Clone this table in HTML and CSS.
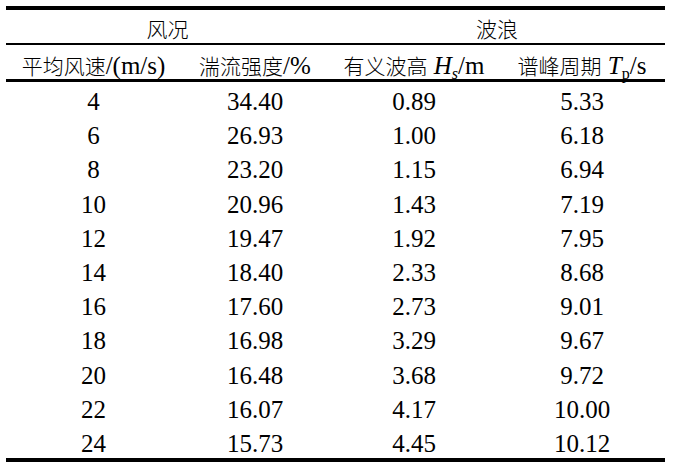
FILE: index.html
```html
<!DOCTYPE html>
<html lang="zh">
<head>
<meta charset="utf-8">
<title>风况与波浪参数</title>
<link rel="stylesheet" href="styles.css">
</head>
<body>
<div class="table">
  <div class="cell grp"><span class="zh">风况</span></div>
  <div class="cell grp"><span class="zh">波浪</span></div>

  <div class="cell hd"><span class="zh">平均风速</span>/(m/s)</div>
  <div class="cell hd"><span class="zh">湍流强度</span>/%</div>
  <div class="cell hd"><span class="zh">有义波高</span> <i>H</i><sub class="si">s</sub>/m</div>
  <div class="cell hd"><span class="zh">谱峰周期</span> <i>T</i><sub>p</sub>/s</div>

  <div class="cell">4</div><div class="cell">34.40</div><div class="cell">0.89</div><div class="cell">5.33</div>
  <div class="cell">6</div><div class="cell">26.93</div><div class="cell">1.00</div><div class="cell">6.18</div>
  <div class="cell">8</div><div class="cell">23.20</div><div class="cell">1.15</div><div class="cell">6.94</div>
  <div class="cell">10</div><div class="cell">20.96</div><div class="cell">1.43</div><div class="cell">7.19</div>
  <div class="cell">12</div><div class="cell">19.47</div><div class="cell">1.92</div><div class="cell">7.95</div>
  <div class="cell">14</div><div class="cell">18.40</div><div class="cell">2.33</div><div class="cell">8.68</div>
  <div class="cell">16</div><div class="cell">17.60</div><div class="cell">2.73</div><div class="cell">9.01</div>
  <div class="cell">18</div><div class="cell">16.98</div><div class="cell">3.29</div><div class="cell">9.67</div>
  <div class="cell">20</div><div class="cell">16.48</div><div class="cell">3.68</div><div class="cell">9.72</div>
  <div class="cell">22</div><div class="cell">16.07</div><div class="cell">4.17</div><div class="cell">10.00</div>
  <div class="cell">24</div><div class="cell">15.73</div><div class="cell">4.45</div><div class="cell">10.12</div>
</div>
</body>
</html>
```

FILE: styles.css
```css
html, body {
  margin: 0;
  padding: 0;
  background: #fff;
}

body {
  font-family: "Liberation Serif", "Noto Sans CJK SC", serif;
  font-size: 25px;
  color: #000;
}

.table {
  display: grid;
  grid-template-columns: 175px 148px 170px 166px;
  width: 659px;
  margin: 6px 0 0 6px;
  border-top: 4px solid #000;
  border-bottom: 4px solid #000;
}

.cell {
  box-sizing: border-box;
  text-align: center;
  white-space: nowrap;
  line-height: 29.2px;
  padding-top: 5px;
  height: 34.2px;
}

.grp {
  grid-column: span 2;
  height: 35px;
  line-height: 26.9px;
  padding-top: 6.1px;
  border-bottom: 2px solid #000;
}

.hd {
  height: 37px;
  line-height: 26.3px;
  padding-top: 7.7px;
  border-bottom: 3px solid #000;
}

.zh {
  font-family: "Noto Sans CJK SC", sans-serif;
  font-size: 21px;
  font-weight: 300;
  line-height: 0;
}

i {
  font-style: italic;
}

sub {
  font-size: 16px;
  line-height: 0;
  vertical-align: -5px;
}

.si {
  font-style: italic;
}
```
